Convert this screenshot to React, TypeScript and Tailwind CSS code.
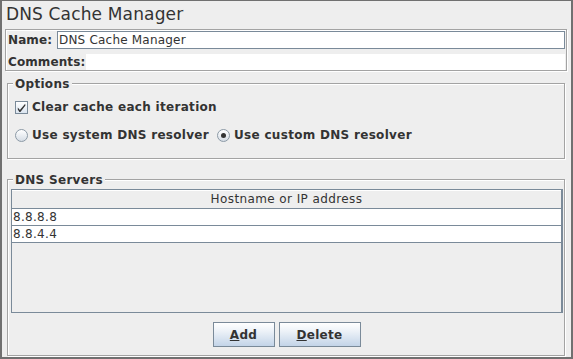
import React from "react";

const etched = "border border-[#a3a3a3] shadow-[inset_1px_1px_0_#fff,1px_1px_0_#fff]";
const btn =
  "h-[25px] border border-[#7a8a99] bg-[linear-gradient(to_bottom,#ffffff,#edf2f8_35%,#c3d4e8)] text-[12px] tracking-[0.3px] font-bold text-[#333] flex items-center justify-center";

function CheckBox({ checked }: { checked: boolean }) {
  return (
    <div className="w-[13px] h-[13px] border border-[#7a8a99] bg-[linear-gradient(to_bottom,#ffffff,#dbe5f0)] flex items-center justify-center">
      {checked && (
        <svg width="11" height="11" viewBox="0 0 11 11">
          <path d="M1.8 5.6 L3.9 8 L9.2 1.8 L9.4 3.6 L4.4 10 L3.4 10 L1.8 7.6 Z" fill="#333" />
        </svg>
      )}
    </div>
  );
}

function Radio({ selected }: { selected: boolean }) {
  return (
    <div className="w-[13px] h-[13px] rounded-full border border-[#8c9aa6] bg-[linear-gradient(to_bottom,#ffffff,#d6dde5)] flex items-center justify-center">
      {selected && <div className="w-[5px] h-[5px] rounded-full bg-[#333]" />}
    </div>
  );
}

function Group({
  title,
  className,
  children,
}: {
  title: string;
  className: string;
  children: React.ReactNode;
}) {
  return (
    <div className={`relative ml-[5px] w-[558px] ${etched} ${className}`}>
      <span className="absolute top-[-7px] left-[5px] px-[2px] bg-[#eeeeee] text-[12px] leading-[14px] font-bold tracking-[0.3px]">
        {title}
      </span>
      {children}
    </div>
  );
}

export default function App() {
  const servers = ["8.8.8.8", "8.8.4.4"];
  return (
    <div
      className="w-[573px] h-[359px] bg-[#eeeeee] border-l-2 border-t border-r-2 border-b-2 border-[#707070] flex flex-col text-[#333]"
      style={{ fontFamily: '"DejaVu Sans", sans-serif' }}
    >
      <div className="h-[28px] pl-[4px] pt-[2px] text-[17px] leading-[22px] tracking-[0.15px]">DNS Cache Manager</div>

      <div className={`ml-[3px] w-[562px] h-[42px] ${etched} flex flex-col pl-[2px] pr-[1px] pt-[1px]`}>
        <div className="flex h-[18px] items-center">
          <span className="w-[49px] text-[12px] font-bold tracking-[0.1px]">Name:</span>
          <div className="flex-1 h-full border border-[#7a8a99] bg-white pl-[1px] text-[12px] leading-[16px] tracking-[0.2px]">
            DNS Cache Manager
          </div>
        </div>
        <div className="flex h-[16px] mt-[5px] items-center">
          <span className="w-[78px] text-[12px] font-bold tracking-[0.1px]">Comments:</span>
          <div className="flex-1 h-full bg-white" />
        </div>
      </div>

      <Group title="Options" className="mt-[12px] h-[76px] pt-[16px] pl-[7px]">
        <div className="flex h-[14px] items-center gap-[4px] text-[12px] font-bold tracking-[0.3px]">
          <CheckBox checked />
          <span>Clear cache each iteration</span>
        </div>
        <div className="flex h-[14px] mt-[14px] items-center text-[12px] font-bold tracking-[0.3px]">
          <Radio selected={false} />
          <span className="ml-[4px]">Use system DNS resolver</span>
          <div className="ml-[8px]">
            <Radio selected />
          </div>
          <span className="ml-[4px]">Use custom DNS resolver</span>
        </div>
      </Group>

      <Group title="DNS Servers" className="mt-[20px] h-[177px] pt-[9px] pl-[3px] pr-[2px] flex flex-col">
        <div className="h-[124px] border border-[#7a8a99] shadow-[1px_0_0_#7a8a99] bg-[#eeeeee] flex flex-col">
          <div className="h-[19px] border-b border-[#7a8a99] shadow-[inset_0_1px_0_#fff] text-[12px] leading-[18px] text-center tracking-[0.4px]">
            Hostname or IP address
          </div>
          {servers.map((s) => (
            <div key={s} className="h-[17px] border-b border-[#7a8a99] bg-white pl-[1px] text-[12px] leading-[16px] tracking-[0.3px]">
              {s}
            </div>
          ))}
        </div>
        <div className="flex justify-center gap-[4px] mt-[9px]">
          <button className={`${btn} w-[62px]`}>
            <span className="underline">A</span>dd
          </button>
          <button className={`${btn} w-[82px]`}>
            <span className="underline">D</span>elete
          </button>
        </div>
      </Group>
    </div>
  );
}
